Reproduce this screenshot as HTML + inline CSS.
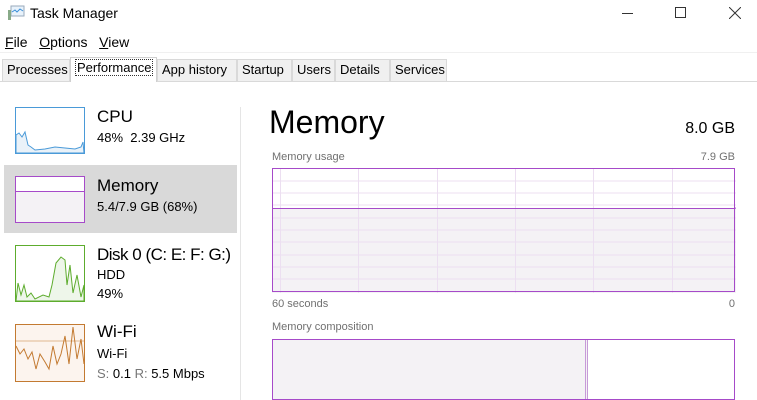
<!DOCTYPE html>
<html><head><meta charset="utf-8"><style>
*{margin:0;padding:0;box-sizing:border-box}
body{width:757px;height:400px;overflow:hidden;background:#fff;font-family:"Liberation Sans",sans-serif;color:#000;position:relative}
.a{position:absolute;white-space:nowrap}
.tab{position:absolute;top:59px;height:22px;border:1px solid #d9d9d9;border-bottom:none;background:#f0f0f0;font-size:13px;line-height:20px;padding-left:4px;color:#000}
.g{color:#707070;font-size:11px}
</style></head><body>
<svg class="a" style="left:7px;top:5px" width="18" height="16" viewBox="0 0 18 16"><rect x="4" y="1" width="13" height="10" fill="#e8f2fb" stroke="#9ab" /><path d="M5 7 L8 5 L10 7 L13 4 L16 6" stroke="#3a8fd8" fill="none"/><rect x="1" y="5" width="3" height="10" fill="#8a8" /></svg>
<div class="a" style="left:30px;top:5px;font-size:14px">Task Manager</div>
<div class="a" style="left:622px;top:13px;width:11px;height:1px;background:#333"></div>
<div class="a" style="left:675px;top:7px;width:11px;height:11px;border:1px solid #333"></div>
<svg class="a" style="left:729px;top:7px" width="12" height="12"><path d="M0 0L12 12M12 0L0 12" stroke="#333"/></svg>
<div class="a" style="left:5px;top:34px;font-size:14px"><u>F</u>ile&nbsp;&nbsp; <u>O</u>ptions&nbsp;&nbsp; <u>V</u>iew</div>
<div class="a" style="left:0;top:52px;width:757px;height:1px;background:#f0f0f0"></div>
<div class="a" style="left:0;top:81px;width:757px;height:1px;background:#d9d9d9"></div>
<div class="tab" style="left:2px;width:68px">Processes</div>
<div class="tab" style="left:70px;top:57px;height:25px;width:87px;background:#fff;border-color:#d0d0d0"><span style="border:1px dotted #333;padding:0 1px">Performance</span></div>
<div class="tab" style="left:157px;width:80px">App history</div>
<div class="tab" style="left:237px;width:55px">Startup</div>
<div class="tab" style="left:292px;width:43px">Users</div>
<div class="tab" style="left:335px;width:55px">Details</div>
<div class="tab" style="left:390px;width:57px">Services</div>

<div class="a" style="left:240px;top:107px;width:1px;height:293px;background:#e5e5e5"></div>
<svg class="a" style="left:15px;top:107px" width="70" height="47"><rect x="0.5" y="0.5" width="69" height="46" fill="#fff" stroke="#4a9ad8"/><path d="M1 46 L1 28 L4 26 L7 30 L10 25 L13 38 L16 40 L20 43 L30 42 L40 40 L50 41 L60 42 L66 40 L68 35 L69 46Z" fill="#eaf2f9" stroke="#4a9ad8"/></svg>
<div class="a" style="left:97px;top:107px;font-size:17px">CPU</div>
<div class="a" style="left:97px;top:130px;font-size:13px">48%&nbsp; 2.39 GHz</div>
<div class="a" style="left:4px;top:165px;width:233px;height:68px;background:#d9d9d9"></div>
<div class="a" style="left:15px;top:176px;width:70px;height:47px;border:1px solid #a64ac9;background:#f4f2f5"><div style="height:15px;background:#fff;border-bottom:1px solid #a64ac9"></div></div>
<div class="a" style="left:97px;top:176px;font-size:17px">Memory</div>
<div class="a" style="left:97px;top:199px;font-size:13px">5.4/7.9 GB (68%)</div>
<svg class="a" style="left:15px;top:245px" width="70" height="57"><rect x="0.5" y="0.5" width="69" height="56" fill="#fff" stroke="#5dac2d"/><path d="M1 56 L3 38 L6 50 L9 40 L12 52 L16 48 L20 54 L28 50 L34 52 L37 40 L41 18 L46 12 L50 15 L52 40 L55 20 L58 48 L62 30 L66 52 L69 40 L69 56Z" fill="#eef6ea" stroke="#5dac2d"/></svg>
<div class="a" style="left:97px;top:245px;font-size:17px;letter-spacing:-0.5px">Disk 0 (C: E: F: G:)</div>
<div class="a" style="left:97px;top:267px;font-size:13px">HDD</div>
<div class="a" style="left:97px;top:286px;font-size:13px">49%</div>
<svg class="a" style="left:15px;top:324px" width="70" height="58"><rect x="0.5" y="0.5" width="69" height="57" fill="#fcf4ee" stroke="#c37a31"/><path d="M1 17 L69 17" stroke="#e0b890"/><path d="M1 22 L5 30 L9 25 L13 35 L17 28 L21 45 L25 30 L30 38 L34 45 L38 22 L42 40 L46 30 L50 12 L54 40 L58 3 L62 35 L66 15 L69 40" fill="none" stroke="#c37a31"/></svg>
<div class="a" style="left:97px;top:322px;font-size:17px">Wi-Fi</div>
<div class="a" style="left:97px;top:346px;font-size:13px">Wi-Fi</div>
<div class="a" style="left:97px;top:366px;font-size:13px"><span style="color:#777">S:</span> 0.1 <span style="color:#777">R:</span> 5.5 Mbps</div>

<div class="a" style="left:269px;top:104px;font-size:32px">Memory</div>
<div class="a" style="right:22px;top:120px;font-size:16px">8.0 GB</div>
<div class="a g" style="left:272px;top:151px">Memory usage</div>
<div class="a g" style="right:22px;top:151px">7.9 GB</div>
<svg class="a" style="left:272px;top:168px" width="464" height="125">
<rect x="0" y="40" width="464" height="85" fill="#f4f2f5"/>
<g stroke="#ecdff1" stroke-width="1">
<path d="M0 13H464M0 25H464M0 37H464M0 50H464M0 62H464M0 74H464M0 87H464M0 99H464M0 111H464"/>
<path d="M8.5 0V125M86.5 0V125M165.5 0V125M243.5 0V125M321.5 0V125M400.5 0V125"/>
</g>
<path d="M0 40.5H462L464 40" stroke="#a64ac9" fill="none"/>
<rect x="0.5" y="0.5" width="462" height="123" fill="none" stroke="#a64ac9"/>
</svg>
<div class="a g" style="left:272px;top:298px">60 seconds</div>
<div class="a g" style="right:22px;top:298px">0</div>
<div class="a g" style="left:272px;top:321px">Memory composition</div>
<div class="a" style="left:272px;top:339px;width:463px;height:61px;border:1px solid #a64ac9;background:#fff">
<div style="width:315px;height:100%;background:#f4f2f5;border-right:3px double #c79ad8"></div></div>
</body></html>
